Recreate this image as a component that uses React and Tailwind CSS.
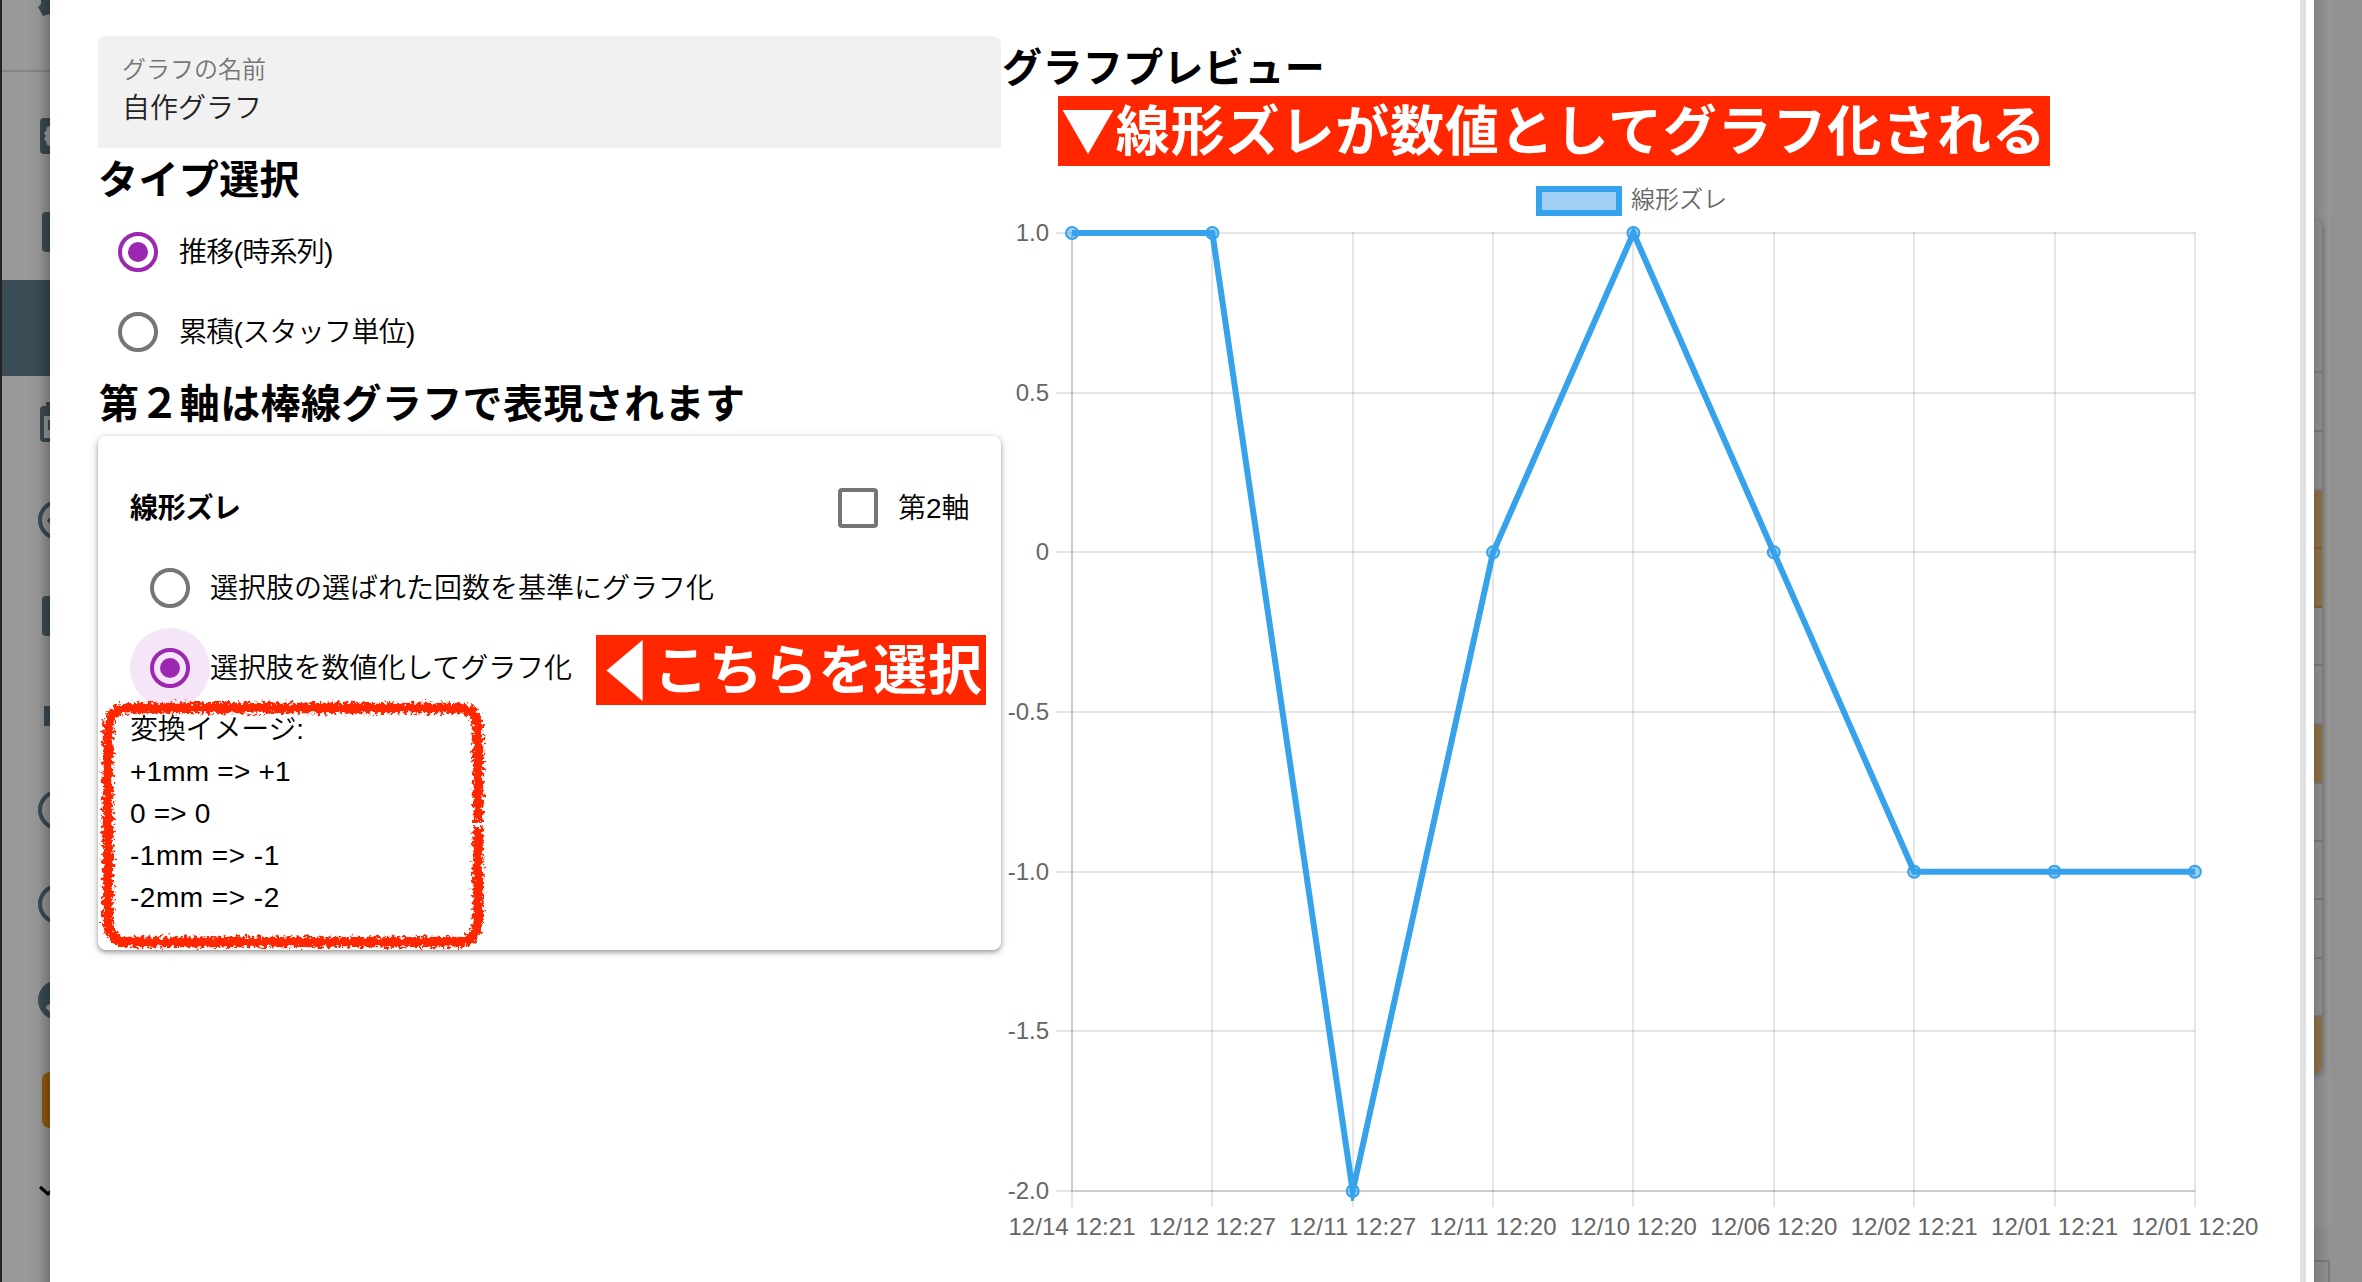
import React from "react";

const X0 = 1072;
const STEP_X = 140.36;
const Y_TOP = 233;
const STEP_Y = 159.67;

const points = [
  ["12/14 12:21", 1],
  ["12/12 12:27", 1],
  ["12/11 12:27", -2],
  ["12/11 12:20", 0],
  ["12/10 12:20", 1],
  ["12/06 12:20", 0],
  ["12/02 12:21", -1],
  ["12/01 12:21", -1],
  ["12/01 12:20", -1],
];
const yTicks = ["1.0", "0.5", "0", "-0.5", "-1.0", "-1.5", "-2.0"];

const px = (i) => X0 + STEP_X * i;
const py = (v) => Y_TOP + (1 - v) * 2 * STEP_Y;
const snap = (n) => Math.round(n);

function Chart() {
  return (
    <svg
      className="block h-[1082px] w-[1299px]"
      viewBox="1001 170 1299 1082"
      fontFamily='"Liberation Sans", "Noto Sans CJK JP", sans-serif'
      fontSize="24"
      fill="#666"
    >
      <defs>
        <clipPath id="plot">
          <rect x="1060" y="221" width="1150" height="980" />
        </clipPath>
      </defs>
      <rect x="1539" y="189" width="80" height="24" fill="#9fcff5" stroke="#36a2eb" strokeWidth="6" />
      <text x="1631" y="207.500" fontWeight="350">線形ズレ</text>
      <g stroke="#000" strokeOpacity="0.1" strokeWidth="2">
        {yTicks.map((t, i) => {
          const y = snap(Y_TOP + i * STEP_Y);
          return <line key={t} x1="1056" x2="2195" y1={y} y2={y} />;
        })}
        {points.map(([t], i) => (
          <line key={t} x1={snap(px(i))} x2={snap(px(i))} y1="232" y2="1207" />
        ))}
        <path d="M1072 232V1191H2195" fill="none" />
      </g>
      {yTicks.map((t, i) => (
        <text key={t} x="1049" y={Y_TOP + i * STEP_Y + 8} textAnchor="end">
          {t}
        </text>
      ))}
      {points.map(([t], i) => (
        <text key={t} x={px(i)} y="1235" textAnchor="middle" textLength="127">
          {t}
        </text>
      ))}
      <polyline
        clipPath="url(#plot)"
        points={points.map(([, v], i) => `${px(i)},${py(v)}`).join(" ")}
        fill="none"
        stroke="#36a2eb"
        strokeWidth="6"
        strokeMiterlimit="10"
      />
      {points.map(([t, v], i) => (
        <circle key={t} cx={px(i)} cy={py(v)} r="6" fill="#36a2eb" fillOpacity="0.5" stroke="#36a2eb" strokeWidth="2" />
      ))}
    </svg>
  );
}

function Radio({ checked }) {
  return (
    <span
      className={
        checked
          ? "flex size-10 shrink-0 items-center justify-center rounded-full border-4 border-[#9c27b0]"
          : "flex size-10 shrink-0 items-center justify-center rounded-full border-4 border-[#757575]"
      }
    >
      {checked && <span className="size-5 rounded-full bg-[#9c27b0]" />}
    </span>
  );
}

function Sidebar() {
  return (
    <div className="relative h-full w-[50px] shrink-0 overflow-hidden border-l-2 border-[#222] bg-[#999]">
      <svg className="block h-[1282px] w-12" viewBox="2 0 48 1282" fill="#3a4c54">
        <path d="M50 0H41V4L38 7L43 16L49 14L50 15Z" />
        <path d="M2 70H50V72H2Z" fill="#858585" />
        <path d="M50 118H44Q40 118 40 122V150Q40 154 44 154H50Z" />
        <path d="M50 126L47 127L46 131L44 133L46 136L44 139L46 141L47 145L50 146Z" fill="#a0a0a0" />
        <path d="M50 212H46Q42 212 42 216V248Q42 252 46 252H50Z" />
        <path d="M2 280H50V376H2Z" />
        <path fillRule="evenodd" d="M50 402H46V406H44Q40 406 40 410V438Q40 442 44 442H50V438H44V416H50ZM50 420H48V430H50Z" />
        <circle cx="58" cy="520" r="18" fill="none" stroke="#3a4c54" strokeWidth="4" />
        <path d="M50 517L47 520.5L50 524Z" />
        <path d="M50 596H46Q42 596 42 600V632Q42 636 46 636H50Z" />
        <path d="M44 706H50V726H44Z" />
        <circle cx="58" cy="810" r="18" fill="none" stroke="#3a4c54" strokeWidth="4" />
        <circle cx="58" cy="904" r="18" fill="none" stroke="#3a4c54" strokeWidth="4" />
        <circle cx="58" cy="1000" r="20" />
        <path d="M50 1004Q46 1005 46 1008L50 1012Z" fill="#a0a0a0" />
        <path d="M50 1072Q42 1073 42 1080V1120Q42 1127 50 1128Z" fill="#965a0d" />
        <path d="M40 1187L48 1194L52 1190" fill="none" stroke="#000" strokeWidth="3" />
      </svg>
      <div className="absolute inset-y-0 right-0 w-[22px] bg-linear-to-r from-black/0 via-black/5 to-black/25" />
    </div>
  );
}

const rightRules = [371, 430, 489, 547, 606, 664, 723, 782, 840, 898, 957, 1015];

function RightEdge() {
  return (
    <div className="relative h-full w-12 shrink-0 overflow-hidden bg-[#929292]">
      <svg className="block h-[1282px] w-12" viewBox="2314 0 48 1282">
        <defs>
          <filter id="soft" x="-100%" y="-10%" width="300%" height="120%">
            <feGaussianBlur stdDeviation="3" />
          </filter>
        </defs>
        <rect x="2314" y="0" width="16" height="1228" fill="#979797" />
        <rect x="2290" y="222" width="33" height="854" rx="8" fill="#6f6f6f" filter="url(#soft)" />
        <rect x="2290" y="220" width="32" height="854" rx="8" fill="#959595" />
        <path d="M2314 491H2322V608H2314ZM2314 725H2322V782H2314ZM2314 1017H2322V1066Q2322 1072 2314 1074Z" fill="#94754a" />
        {rightRules.map((y) => (
          <rect key={y} x="2314" y={y} width="8" height="2" fill={y === 547 || y === 606 ? "#8a6638" : "#808080"} />
        ))}
        <path d="M2314 1261H2329V1282" fill="none" stroke="#7c7c7c" strokeWidth="2" />
      </svg>
      <div className="absolute inset-y-0 left-0 w-4 bg-linear-to-r from-black/15 to-black/0" />
    </div>
  );
}

function SketchFrame() {
  return (
    <svg className="pointer-events-none absolute top-[257px] left-[-1px] h-[266px] w-[402px]" viewBox="96 692 402 266">
      <defs>
        <filter id="rough" x="-5%" y="-5%" width="110%" height="110%">
          <feTurbulence type="fractalNoise" baseFrequency="0.3" numOctaves="3" seed="4" result="n" />
          <feDisplacementMap in="SourceGraphic" in2="n" scale="11" xChannelSelector="R" yChannelSelector="G" />
        </filter>
      </defs>
      <path
        d="M477 821V728Q477 707 455 707H129Q107 707 107 728V919Q107 941 129 941H455Q477 941 477 919V826"
        fill="none"
        stroke="#ff2600"
        strokeWidth="10.500"
        filter="url(#rough)"
      />
    </svg>
  );
}

export default function App() {
  return (
    <div className="flex h-[1282px] w-[2362px] overflow-hidden bg-white font-['Liberation_Sans','Noto_Sans_CJK_JP',sans-serif] text-[28px] leading-[42px] font-[350] whitespace-nowrap text-black">
      <Sidebar />
      <main className="flex min-w-0 flex-1 pl-12">
        <section className="w-[903px] shrink-0 pt-9">
          <div className="flex h-28 flex-col rounded-t-lg bg-[#f1f1f1] px-6 pt-4">
            <span className="text-2xl leading-[36px] text-[#757575]">グラフの名前</span>
            <span className="leading-[41px] text-[#222]">自作グラフ</span>
          </div>
          <h2 className="h-16 text-[40px] leading-[65px] font-bold tracking-[0.4px]">タイプ選択</h2>
          <div className="flex h-20 items-center gap-[21px] pl-5">
            <Radio checked />
            <span className="pt-0.5 tracking-[-0.7px]">推移(時系列)</span>
          </div>
          <div className="flex h-20 items-center gap-[21px] pl-5">
            <Radio />
            <span className="pt-0.5 tracking-[-0.7px]">累積(スタッフ単位)</span>
          </div>
          <h2 className="h-16 pl-px text-[40px] leading-[65px] font-bold tracking-[0.4px]">第２軸は棒線グラフで表現されます</h2>
          <div className="relative h-[514px] rounded-lg bg-white px-8 pt-8 shadow-[0_2px_4px_rgba(0,0,0,0.3),0_2px_10px_rgba(0,0,0,0.18)]">
            <div className="flex h-20 items-center justify-between">
              <span className="pt-0.5 font-bold tracking-[-0.3px]">線形ズレ</span>
              <span className="flex items-center gap-5">
                <span className="size-10 rounded border-4 border-[#757575]" />
                <span className="w-[71px] pt-0.5">第2軸</span>
              </span>
            </div>
            <div className="flex h-20 items-center gap-5 pl-5">
              <Radio />
              <span className="pt-0.5">選択肢の選ばれた回数を基準にグラフ化</span>
            </div>
            <div className="flex h-20 items-center">
              <span className="flex size-20 shrink-0 items-center justify-center rounded-full bg-[#f5e5f8]">
                <Radio checked />
              </span>
              <span className="w-[386px] shrink-0 pt-0.5 tracking-[-0.1px]">選択肢を数値化してグラフ化</span>
              <span className="mt-1 flex h-[70px] w-[390px] shrink-0 items-center bg-[#ff2600] pb-1.5 pl-[3px] font-['Noto_Sans_CJK_JP',sans-serif] text-[54px] leading-[70px] font-bold tracking-[0.8px] text-white">
                <span className="w-[55px] shrink-0 origin-[26px_50%] scale-x-[0.82] scale-y-[1.2]">◀</span>
                <span>こちらを選択</span>
              </span>
            </div>
            <div className="flex flex-col pt-px">
              <span className="tracking-[-0.2px]">変換イメージ:</span>
              <span className="tracking-[0.2px]">+1mm =&gt; +1</span>
              <span className="tracking-[0.2px]">0 =&gt; 0</span>
              <span className="tracking-[0.5px]">-1mm =&gt; -1</span>
              <span className="tracking-[0.5px]">-2mm =&gt; -2</span>
            </div>
            <SketchFrame />
          </div>
        </section>
        <section className="w-[1299px] shrink-0 pt-9">
          <h2 className="h-[60px] pl-px text-[40px] leading-[64px] font-bold tracking-[0.4px]">グラフプレビュー</h2>
          <div className="ml-[57px] flex h-[70px] w-[992px] items-center bg-[#ff2600] pb-1.5 pl-[3px] font-['Noto_Sans_CJK_JP',sans-serif] text-[54px] leading-[70px] font-bold tracking-[0.85px] text-white">
            ▼線形ズレが数値としてグラフ化される
          </div>
          <div className="pt-1">
            <Chart />
          </div>
        </section>
        <div className="h-full w-1.5 shrink-0 bg-[#e0e0e0]" />
      </main>
      <RightEdge />
    </div>
  );
}
